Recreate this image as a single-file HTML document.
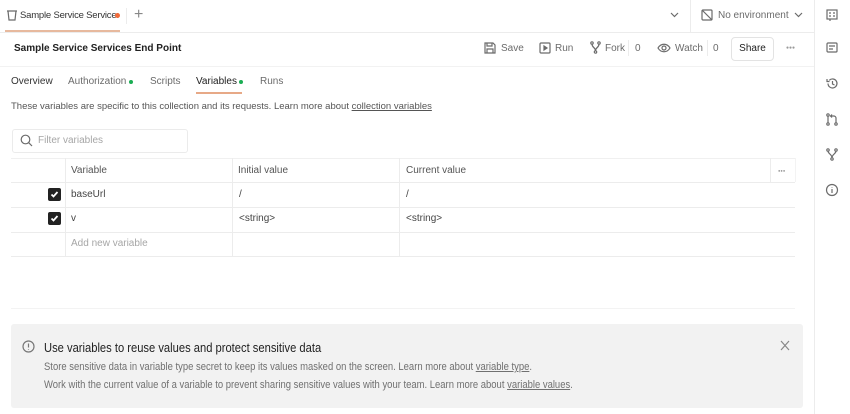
<!DOCTYPE html>
<html><head><meta charset="utf-8"><style>
*{box-sizing:border-box;margin:0;padding:0}
body{width:850px;height:414px;overflow:hidden;background:#fff;font-family:"Liberation Sans",sans-serif;color:#212121;position:relative;font-size:11px}
.a{position:absolute;white-space:nowrap}
.g{color:#6b6b6b}
.l{background:#ececec;position:absolute}
svg{position:absolute;fill:none;stroke:#6b6b6b;stroke-width:1.2}
</style></head><body>
<!-- top bar -->
<div class="l" style="left:0;top:32px;width:815px;height:1px"></div>
<div class="l" style="left:814px;top:0;width:1px;height:414px"></div>
<div class="l" style="left:126px;top:8px;width:1px;height:16px"></div>
<div class="l" style="left:690px;top:0;width:1px;height:32px"></div>
<svg style="left:6px;top:9px" width="12" height="12" viewBox="0 0 12 12"><path d="M1 2h10M2 2l1 9h6l1-9"/></svg>
<div class="a" style="left:20px;top:10px;font-size:9.5px;color:#333;letter-spacing:-0.2px">Sample Service Service:</div>
<div class="a" style="left:115px;top:13px;width:5px;height:5px;border-radius:50%;background:#f26b3a"></div>
<div class="a" style="left:5px;top:30px;width:115px;height:2px;background:#e7b99e"></div>
<div class="a" style="left:134px;top:6px;font-size:16px;color:#888">+</div>
<svg style="left:670px;top:12px" width="9" height="6" viewBox="0 0 9 6"><path d="M1 1l3.5 3.5L8 1"/></svg>
<svg style="left:701px;top:9px" width="12" height="12" viewBox="0 0 12 12"><rect x="1" y="1" width="10" height="10" rx="1"/><path d="M1 1l10 10"/></svg>
<div class="a g" style="left:718px;top:10px;font-size:10px">No environment</div>
<svg style="left:794px;top:12px" width="9" height="6" viewBox="0 0 9 6"><path d="M1 1l3.5 3.5L8 1"/></svg>
<div class="l" style="left:814px;top:0;width:1px;height:32px"></div>
<svg style="left:826px;top:9px" width="12" height="13" viewBox="0 0 12 13"><rect x="1" y="1" width="10" height="9"/><path d="M3 4h2M7 4h2M3 7h2M7 7h2M4 10v2"/></svg>
<!-- header -->
<div class="a" style="left:14px;top:43px;font-size:10px;font-weight:bold">Sample Service Services End Point</div>
<svg style="left:484px;top:42px" width="12" height="12" viewBox="0 0 12 12"><path d="M1 1h8l2 2v8H1zM3 1v3h5V1M3 11V7h6v4"/></svg>
<div class="a g" style="left:501px;top:43px;font-size:10px">Save</div>
<svg style="left:539px;top:42px" width="12" height="12" viewBox="0 0 12 12"><rect x="1" y="1" width="10" height="10" rx="1"/><path d="M5 4l3 2-3 2z" fill="#6b6b6b"/></svg>
<div class="a g" style="left:555px;top:43px;font-size:10px">Run</div>
<svg style="left:590px;top:41px" width="11" height="13" viewBox="0 0 11 13"><circle cx="2" cy="2" r="1.2"/><circle cx="9" cy="2" r="1.2"/><circle cx="5.5" cy="11" r="1.2"/><path d="M2 3c0 4 3.5 3 3.5 7M9 3c0 4-3.5 3-3.5 7"/></svg>
<div class="a g" style="left:605px;top:43px;font-size:10px">Fork</div>
<div class="l" style="left:628px;top:40px;width:1px;height:16px"></div>
<div class="a g" style="left:635px;top:43px;font-size:10px">0</div>
<svg style="left:657px;top:43px" width="14" height="10" viewBox="0 0 14 10"><path d="M1 5c3-5 9-5 12 0c-3 5-9 5-12 0z"/><circle cx="7" cy="5" r="2"/></svg>
<div class="a g" style="left:675px;top:43px;font-size:10px">Watch</div>
<div class="l" style="left:707px;top:40px;width:1px;height:16px"></div>
<div class="a g" style="left:713px;top:43px;font-size:10px">0</div>
<div class="a" style="left:731px;top:37px;width:43px;height:24px;border:1px solid #e3e3e3;border-radius:4px;font-size:10px;text-align:center;line-height:22px">Share</div>
<div class="a" style="left:786px;top:45px;font-size:5px;letter-spacing:0px;color:#999">●●●</div>
<div class="l" style="left:0;top:66px;width:814px;height:1px;background:#f2f2f2"></div>
<!-- right sidebar icons -->
<svg style="left:826px;top:42px" width="12" height="12" viewBox="0 0 12 12"><rect x="1" y="1" width="10" height="9" rx="1"/><path d="M3 4h6M3 7h4"/></svg>
<svg style="left:826px;top:77px" width="13" height="13" viewBox="0 0 13 13"><path d="M2 6.5a4.5 4.5 0 1 0 1.3-3.2M1 2v2.5h2.5M6.5 4v3l2 1"/></svg>
<svg style="left:826px;top:113px" width="12" height="13" viewBox="0 0 12 13"><circle cx="2" cy="2" r="1.2"/><circle cx="2" cy="11" r="1.2"/><circle cx="10" cy="11" r="1.2"/><path d="M2 3v7M10 10V5c0-1-1-2-2-2H5M6 1.5L4.5 3 6 4.5"/></svg>
<svg style="left:826px;top:148px" width="12" height="13" viewBox="0 0 12 13"><circle cx="2" cy="2" r="1.2"/><circle cx="10" cy="2" r="1.2"/><circle cx="6" cy="11" r="1.2"/><path d="M2 3c0 3 4 3 4 7M10 3c0 3-4 3-4 7"/></svg>
<svg style="left:825px;top:183px" width="14" height="14" viewBox="0 0 14 14"><circle cx="7" cy="7" r="5.5"/><path d="M7 6v4M7 4v.5"/></svg>
<!-- tabs -->
<div class="a g" style="left:11px;top:76px;font-size:10px;color:#333">Overview</div>
<div class="a g" style="left:68px;top:76px;font-size:10px">Authorization</div>
<div class="a" style="left:129px;top:80px;width:4px;height:4px;border-radius:50%;background:#1aad53"></div>
<div class="a g" style="left:150px;top:76px;font-size:10px">Scripts</div>
<div class="a" style="left:196px;top:76px;font-size:10px;color:#212121">Variables</div>
<div class="a" style="left:239px;top:80px;width:4px;height:4px;border-radius:50%;background:#1aad53"></div>
<div class="a" style="left:196px;top:92px;width:46px;height:1.5px;background:#e7a987"></div>
<div class="a g" style="left:260px;top:76px;font-size:10px">Runs</div>
<div class="a g" style="left:11px;top:101px;font-size:9.5px;color:#555">These variables are specific to this collection and its requests. Learn more about <u>collection variables</u></div>
<!-- filter -->
<div class="a" style="left:12px;top:129px;width:176px;height:24px;border:1px solid #ebebeb;border-radius:3px"></div>
<svg style="left:20px;top:134px" width="13" height="13" viewBox="0 0 13 13"><circle cx="5.5" cy="5.5" r="4.3"/><path d="M8.7 8.7l3.3 3.3"/></svg>
<div class="a" style="left:38px;top:135px;font-size:10px;color:#a6a6a6">Filter variables</div>
<!-- table -->
<div class="l" style="left:11px;top:158px;width:784px;height:1px;background:#f0f0f0"></div>
<div class="l" style="left:11px;top:182px;width:784px;height:1px"></div>
<div class="l" style="left:11px;top:207px;width:784px;height:1px"></div>
<div class="l" style="left:11px;top:232px;width:784px;height:1px"></div>
<div class="l" style="left:11px;top:256px;width:784px;height:1px"></div>
<div class="l" style="left:65px;top:158px;width:1px;height:98px"></div>
<div class="l" style="left:232px;top:158px;width:1px;height:98px"></div>
<div class="l" style="left:399px;top:158px;width:1px;height:98px"></div>
<div class="l" style="left:770px;top:158px;width:1px;height:24px"></div>
<div class="l" style="left:795px;top:158px;width:1px;height:24px;background:#f3f3f3"></div>
<div class="a g" style="left:71px;top:165px;font-size:10px;color:#555">Variable</div>
<div class="a g" style="left:238px;top:165px;font-size:10px;color:#555">Initial value</div>
<div class="a g" style="left:406px;top:165px;font-size:10px;color:#555">Current value</div>
<div class="a" style="left:778px;top:168px;font-size:4px;color:#999">●●●</div>
<div class="a" style="left:48px;top:188px;width:13px;height:13px;background:#222;border-radius:2px"></div>
<svg style="left:50px;top:190px;stroke:#fff;stroke-width:1.8" width="9" height="9" viewBox="0 0 9 9"><path d="M1.5 4.5l2 2 4-4.5"/></svg>
<div class="a" style="left:48px;top:212px;width:13px;height:13px;background:#222;border-radius:2px"></div>
<svg style="left:50px;top:214px;stroke:#fff;stroke-width:1.8" width="9" height="9" viewBox="0 0 9 9"><path d="M1.5 4.5l2 2 4-4.5"/></svg>
<div class="a" style="left:71px;top:189px;font-size:10px;color:#444">baseUrl</div>
<div class="a" style="left:239px;top:189px;font-size:10px;color:#444">/</div>
<div class="a" style="left:406px;top:189px;font-size:10px;color:#444">/</div>
<div class="a" style="left:71px;top:213px;font-size:10px;color:#444">v</div>
<div class="a" style="left:239px;top:213px;font-size:10px;color:#444">&lt;string&gt;</div>
<div class="a" style="left:406px;top:213px;font-size:10px;color:#444">&lt;string&gt;</div>
<div class="a" style="left:71px;top:238px;font-size:10px;color:#a6a6a6">Add new variable</div>
<div class="l" style="left:11px;top:308px;width:784px;height:1px;background:#f3f3f3"></div>
<!-- banner -->
<div class="a" style="left:11px;top:324px;width:792px;height:84px;background:#f2f2f2;border-radius:3px"></div>
<svg style="left:22px;top:340px;stroke:#777" width="13" height="13" viewBox="0 0 13 13"><circle cx="6.5" cy="6.5" r="5.5"/><path d="M6.5 3.5v4M6.5 9v.6"/></svg>
<div class="a" style="left:44px;top:340px;font-size:13px;color:#222;transform:scaleX(.86);transform-origin:left">Use variables to reuse values and protect sensitive data</div>
<svg style="left:780px;top:340px;stroke:#888" width="10" height="11" viewBox="0 0 10 11"><path d="M1 1l8 9M9 1l-8 9"/></svg>
<div class="a" style="left:44px;top:361px;font-size:11px;color:#707070;transform:scaleX(.86);transform-origin:left">Store sensitive data in variable type secret to keep its values masked on the screen. Learn more about <u>variable type</u>.</div>
<div class="a" style="left:44px;top:379px;font-size:11px;color:#707070;transform:scaleX(.86);transform-origin:left">Work with the current value of a variable to prevent sharing sensitive values with your team. Learn more about <u>variable values</u>.</div>
</body></html>
